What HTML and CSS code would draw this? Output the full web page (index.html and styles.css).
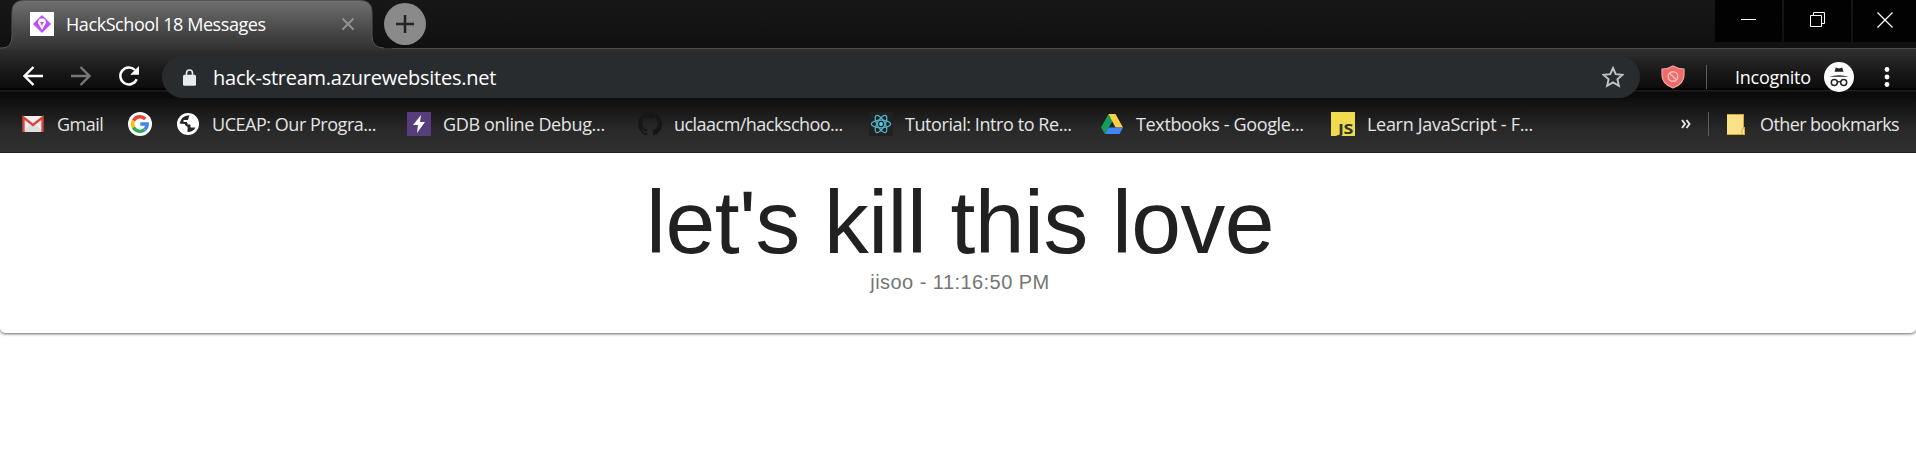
FILE: index.html
```html
<!DOCTYPE html>
<html lang="en">
<head>
<meta charset="utf-8">
<title>HackSchool 18 Messages</title>
<link rel="stylesheet" href="styles.css">
</head>
<body>
<div class="window">
  <header class="chrome">
    <div class="tabstrip">
      <div class="tab">
        <svg class="tab-shape" width="392" height="50" viewBox="0 0 392 50">
          <defs><linearGradient id="tabfill" x1="0" y1="0" x2="0" y2="1"><stop offset="0" stop-color="#6e6e6e"/><stop offset=".2" stop-color="#636363"/><stop offset=".6" stop-color="#484848"/><stop offset="1" stop-color="#313131"/></linearGradient></defs>
          <path d="M0 50V48H2Q12 48 12 36V12Q12 .5 24 .5H360Q372 .5 372 12V36Q372 48 384 48H392V50Z" fill="url(#tabfill)"/>
          <path d="M0 48H2Q12 48 12 36V12Q12 .5 24 .5H360Q372 .5 372 12V36Q372 48 384 48" fill="none" stroke="#555"/>
        </svg>
        <div class="tab-content">
          <svg width="24" height="24" viewBox="0 0 24 24"><path fill="#fff" d="M0 0h24v24H0z"/><path d="M12 3l9 9-9 9-9-9z" fill="#bd4dff"/><path d="M12 6.300a4 4 0 0 0-2.700 7L12 18l2.700-4.700A4 4 0 0 0 12 6.300z" fill="#fff"/><path d="M10 10h4l-1.300 2-.7 3-.7-3z" fill="#bd4dff"/></svg>
          <span class="tab-title">HackSchool 18 Messages</span>
          <svg class="tab-close" width="14" height="14" viewBox="0 0 14 14"><path d="M1.500 1.500l11 11M12.500 1.500l-11 11" stroke="#929292" stroke-width="2"/></svg>
        </div>
      </div>
      <div class="newtab"><svg width="42" height="42" viewBox="0 0 42 42"><circle cx="21" cy="21" r="21" fill="#8a8a8a"/><path d="M21 12v18M12 21h18" stroke="#222427" stroke-width="2.600"/></svg></div>
      <div class="controls">
        <div class="control"><svg width="16" height="16" viewBox="0 0 16 16"><path d="M0 7.500h15" stroke="#fff"/></svg></div>
        <div class="control"><svg width="16" height="16" viewBox="0 0 16 16"><path d="M.5 3.500h11v11H.5zM3.500 3V.5h11v11H12" fill="none" stroke="#fff"/></svg></div>
        <div class="control last"><svg width="16" height="16" viewBox="0 0 16 16"><path d="M.5.5l15 15M15.500.5l-15 15" stroke="#fff" stroke-width="1.300"/></svg></div>
      </div>
    </div>
    <div class="toolbar">
      <svg class="nav-icon" width="20" height="20" viewBox="0 0 20 20"><path d="M20 10H2M10.500 1L1.500 10l9 9" fill="none" stroke="#fff" stroke-width="2.400"/></svg>
      <svg class="nav-icon" width="20" height="20" viewBox="0 0 20 20"><path d="M0 10h18M9.500 1l9 9-9 9" fill="none" stroke="#777" stroke-width="2.400"/></svg>
      <svg class="nav-icon" width="20" height="20" viewBox="0 0 20 20"><path d="M17.700 13.300A8.500 8.500 0 1 1 16 4" fill="none" stroke="#fff" stroke-width="2.500"/><path d="M20 0v8.800h-8.800z" fill="#fff"/></svg>
      <div class="omnibox">
        <svg width="13" height="17" viewBox="0 0 13 17"><path d="M3.500 7V4a3 3 0 0 1 6 0v3" fill="none" stroke="#e8eaed" stroke-width="1.600"/><rect y="5.700" width="13" height="11" rx="1.500" fill="#e8eaed"/></svg>
        <span class="url">hack-stream.azurewebsites.net</span>
        <svg class="star" width="22" height="22" viewBox="0 0 22 22"><path d="M11 2l2.700 6.200 6.800.6-5.100 4.500 1.500 6.600L11 16.400l-5.900 3.500 1.500-6.600-5.100-4.500 6.800-.6z" fill="none" stroke="#bfc2c6" stroke-width="1.900"/></svg>
      </div>
      <svg class="shield" width="24" height="24" viewBox="0 0 24 24"><path d="M12 1Q17 4 23 4V10Q23 19 12 23Q1 19 1 10V4Q7 4 12 1Z" fill="#f06a6a" stroke="#f3a6a2" stroke-width="1.200"/><circle cx="12" cy="11.500" r="4.800" fill="none" stroke="#ffc1bd" stroke-width="1.400"/><path d="M8.700 8.200l6.600 6.600" stroke="#ffc1bd" stroke-width="1.400"/></svg>
      <span class="divider toolbar-divider"></span>
      <span class="incognito">Incognito</span>
      <svg class="avatar" width="30" height="30" viewBox="0 0 30 30"><circle cx="15" cy="15" r="15" fill="#fff"/><path d="M5 14.800q10-3 20 0zM10.500 9.800l1.300-4.300 3.200 1 3.200-1 1.300 4.300z" fill="#222"/><circle cx="10.300" cy="20.500" r="3" fill="none" stroke="#222" stroke-width="1.500"/><circle cx="19.700" cy="20.500" r="3" fill="none" stroke="#222" stroke-width="1.500"/><path d="M13.300 20.300q1.700-1.200 3.400 0" fill="none" stroke="#222" stroke-width="1.300"/></svg>
      <svg class="menu" width="6" height="20" viewBox="0 0 6 20"><g fill="#fff"><circle cx="3" cy="2.500" r="2.400"/><circle cx="3" cy="10" r="2.400"/><circle cx="3" cy="17.500" r="2.400"/></g></svg>
    </div>
    <nav class="bookmarks">
      <div class="bookmark gmail"><svg width="24" height="24" viewBox="0 0 24 24"><path d="M2 4h20v16H2z" fill="#eee"/><path d="M2 20l8-8 2 2 2-2 8 8" fill="#ddd"/><path d="M2.500 20V5.500L12 13l9.500-7.500V20" fill="none" stroke="#d5473c" stroke-width="2.400"/></svg><span>Gmail</span></div>
      <div class="bookmark google"><svg width="24" height="24" viewBox="0 0 24 24"><circle cx="12" cy="12" r="12" fill="#fff"/><g fill="none" stroke-width="3.400"><path d="M17.300 7A7.300 7.300 0 0 0 5.500 8.600" stroke="#ea4335"/><path d="M5.500 8.600a7.300 7.300 0 0 0 0 6.800" stroke="#fbbc05"/><path d="M5.500 15.400A7.300 7.300 0 0 0 16.700 17.600" stroke="#34a853"/><path d="M16.700 17.600A7.300 7.300 0 0 0 19.200 12H12.300" stroke="#4285f4"/></g></svg></div>
      <div class="bookmark uceap"><svg width="24" height="24" viewBox="0 0 24 24"><circle cx="12" cy="12" r="11" fill="#fff"/><path d="M13.500 3.500Q8.500 3 5.500 7L3.500 11.500 9 12v2.500h2.500v5.500Q17 20 19.500 15.500h-5v-3h-3v-2.500h-4V8h5V6z" fill="#252525"/><path d="M12 7.500l2.500-2.500 1 3.500 4.500 2v4h-4.500l-1.500-3-3-.5zM5 13l5 .5 1.500 3-1.500 3-4-2z" fill="#fff"/></svg><span>UCEAP: Our Progra...</span></div>
      <div class="bookmark gdb"><svg width="24" height="24" viewBox="0 0 24 24"><path d="M0 0h24v24H0z" fill="#563d7c"/><path d="M14 3L6 13h5l-1 8 8-11h-5z" fill="#fff"/></svg><span>GDB online Debug...</span></div>
      <div class="bookmark github"><svg width="24" height="24" viewBox="0 0 16 16"><path fill="#181616" d="M8 0C3.580 0 0 3.580 0 8c0 3.540 2.290 6.530 5.470 7.590.4.070.55-.17.55-.38v-1.490c-2.010.37-2.530-.49-2.690-.94-.36-.92-.84-1.150-.84-1.150-.7-.37-.02-.36.010-.36.77.1 1.200.82 1.200.82.72 1.210 1.870.87 2.330.66.070-.52.28-.87.510-1.070-1.780-.2-3.640-.89-3.640-3.950 0-.87.310-1.590.82-2.150-.08-.2-.36-1.020.08-2.120 0 0 .67-.21 2.200.82a7.600 7.600 0 0 1 4 0c1.530-1.040 2.200-.82 2.200-.82.44 1.100.16 1.920.08 2.120.51.56.82 1.270.82 2.150 0 3.070-1.870 3.750-3.650 3.950.29.25.54.73.54 1.480v2.200c0 .21.150.46.55.38A8 8 0 0 0 16 8c0-4.420-3.580-8-8-8z"/></svg><span>uclaacm/hackschoo...</span></div>
      <div class="bookmark react"><svg width="24" height="24" viewBox="0 0 24 24"><path d="M0 0h24v24H0z" fill="#202020"/><g fill="none" stroke="#4fb3cb" stroke-width="1.300"><ellipse cx="12" cy="12" rx="9.700" ry="3.800"/><ellipse cx="12" cy="12" rx="9.700" ry="3.800" transform="rotate(60 12 12)"/><ellipse cx="12" cy="12" rx="9.700" ry="3.800" transform="rotate(120 12 12)"/></g><circle cx="12" cy="12" r="1.900" fill="#5fd0ea"/></svg><span>Tutorial: Intro to Re...</span></div>
      <div class="bookmark drive"><svg width="24" height="24" viewBox="0 0 24 24"><path d="M8.500 2L1 15.500l4 6.500L12.500 9z" fill="#149e5c"/><path d="M8.500 2h7L23 15.500h-7.500z" fill="#ffcf48"/><path d="M8.500 15.500H23L19.500 22H5z" fill="#4285f4"/></svg><span>Textbooks - Google...</span></div>
      <div class="bookmark js"><svg width="24" height="24" viewBox="0 0 24 24"><path d="M0 0h24v24H0z" fill="#f0db4f"/><text class="js-mark" x="7" y="21.800" textLength="15" lengthAdjust="spacingAndGlyphs">JS</text></svg><span>Learn JavaScript - F...</span></div>
      <svg class="overflow" width="10" height="10" viewBox="0 0 10 10"><path d="M1 1l3 4-3 4M5.500 1l3 4-3 4" fill="none" stroke="#e8e8e8" stroke-width="1.900"/></svg>
      <span class="divider"></span>
      <div class="bookmark other"><svg width="18" height="23" viewBox="0 0 18 23"><path d="M0 1h17v13l1 1v7H0z" fill="#fbe08a"/><path d="M0 1.500h17M0 21.500h15M16.500 1v14" stroke="#d6a936"/><path d="M15 21.500v-5l2.500-2v7z" fill="#ffe692" stroke="#d9ad37"/></svg><span>Other bookmarks</span></div>
    </nav>
  </header>
  <main class="page">
    <article class="card">
      <h1 class="message">let's kill this love</h1>
      <p class="byline">jisoo - 11:16:50 PM</p>
    </article>
  </main>
</div>
</body>
</html>
```
FILE: styles.css
```css
* { box-sizing: border-box; }
body { margin: 0; background: #fff; font-family: "Open Sans", "Noto Sans", sans-serif; }
svg { display: block; flex: none; }
.window { height: 466px; overflow: hidden; }
.chrome { height: 153px; background: #0d0d0d; color: #fff; white-space: nowrap; }
.tabstrip { display: flex; height: 48px; background: linear-gradient(#171717, #101010); }
.tab { position: relative; width: 384px; height: 48px; }
.tab-shape { position: absolute; left: 0; top: 0; z-index: 1; }
.tab-content { position: relative; z-index: 2; display: flex; align-items: center; height: 48px; padding-left: 30px; }
.tab-title { width: 275px; margin-left: 12px; font-size: 18px; letter-spacing: -0.42px; }
.newtab { padding-top: 3px; }
.controls { display: flex; gap: 2px; margin-left: auto; height: 42px; }
.control { display: flex; align-items: center; justify-content: center; width: 67px; padding-bottom: 2px; background: #020202; }
.control.last { width: 63px; }
.toolbar { display: flex; align-items: center; height: 50px; padding: 8px 0 0 23px; background: linear-gradient(#494949 0 1px, #303030 1px, #1a1a1a 22px, #0c0c0c 40px, #000 41px, #000 42px, #1c1c1c 42px, #1c1c1c 43px, #0b0b0b 44px, #0b0b0b); }
.nav-icon { margin: 0 28px 2px 0; }
.omnibox { display: flex; align-items: center; width: 1478px; height: 42px; margin-left: -5px; padding: 0 16px 0 21px; border-radius: 21px; background: #292c2f; }
.url { margin-left: 17px; font-size: 20px; letter-spacing: -0.25px; }
.star { margin-left: auto; }
.shield { margin-left: 21px; }
.divider { flex: none; width: 1px; height: 24px; background: #5e5e5e; }
.toolbar-divider { margin-left: 21px; }
.incognito { width: 76px; margin-left: 28px; font-size: 18px; letter-spacing: -0.25px; }
.avatar { margin-left: 13px; margin-bottom: 1px; }
.menu { margin-left: 30px; }
.bookmarks { display: flex; align-items: center; height: 55px; padding: 0 0 3px 21px; background: linear-gradient(#0e0e0e, #292929 32px, #303030 54px, #202020 54px); color: #e4e4e4; font-size: 18px; }
.bookmark { display: flex; flex: none; align-items: center; gap: 12px; letter-spacing: -0.35px; }
.gmail { width: 107px; letter-spacing: -0.5px; }
.google { width: 48px; }
.uceap { width: 231px; letter-spacing: -0.47px; }
.gdb { width: 231px; }
.github { width: 231px; letter-spacing: -0.53px; }
.react { width: 231px; letter-spacing: -0.42px; }
.drive { width: 231px; }
.js { width: 350px; letter-spacing: -0.3px; }
.js-mark { font: 700 14px "Open Sans", sans-serif; fill: #323330; }
.overflow { margin-right: 17px; }
.other { margin-left: 18px; gap: 15px; letter-spacing: -0.58px; }
.page { height: 313px; overflow: hidden; background: #fff; }
.card { height: 180px; padding-top: 17px; border-radius: 0 0 5px 5px; text-align: center; font-family: "Liberation Sans", Arial, sans-serif; box-shadow: 0 1px 3px rgba(0,0,0,.6); }
.message { margin: 0; padding-left: 4px; color: #212121; font-size: 89.500px; line-height: 104px; font-weight: 400; letter-spacing: -0.55px; }
.byline { margin: -4px 0 0; padding-left: 4px; color: #757575; font-size: 20px; line-height: 24px; letter-spacing: .45px; }
```
